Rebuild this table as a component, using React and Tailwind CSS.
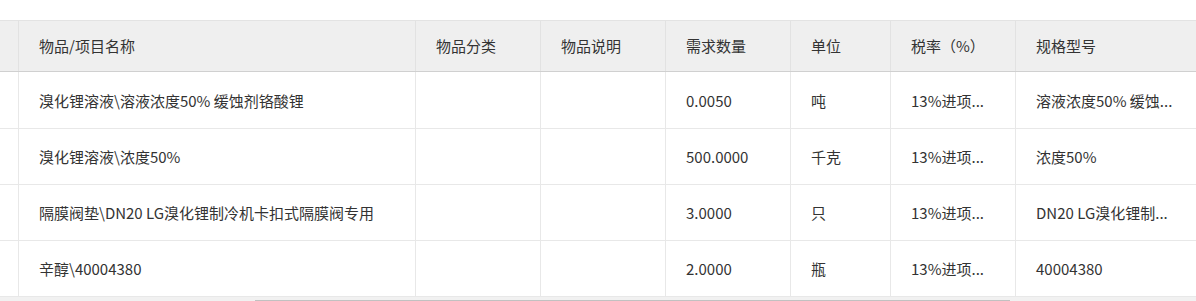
const columns = [
  { key: "name", title: "物品/项目名称" },
  { key: "category", title: "物品分类" },
  { key: "desc", title: "物品说明" },
  { key: "qty", title: "需求数量" },
  { key: "unit", title: "单位" },
  { key: "tax", title: "税率（%）" },
  { key: "spec", title: "规格型号" },
];

const rows = [
  { name: "溴化锂溶液\\溶液浓度50% 缓蚀剂铬酸锂", category: "", desc: "", qty: "0.0050", unit: "吨", tax: "13%进项...", spec: "溶液浓度50% 缓蚀..." },
  { name: "溴化锂溶液\\浓度50%", category: "", desc: "", qty: "500.0000", unit: "千克", tax: "13%进项...", spec: "浓度50%" },
  { name: "隔膜阀垫\\DN20 LG溴化锂制冷机卡扣式隔膜阀专用", category: "", desc: "", qty: "3.0000", unit: "只", tax: "13%进项...", spec: "DN20 LG溴化锂制..." },
  { name: "辛醇\\40004380", category: "", desc: "", qty: "2.0000", unit: "瓶", tax: "13%进项...", spec: "40004380" },
];

const grid = "grid grid-cols-[18px_397px_125px_125px_125px_100px_125px_1fr]";

export default function App() {
  return (
    <div
      className="w-[1196px] h-[301px] overflow-hidden bg-white text-[#333] text-[15px]"
      style={{ fontFamily: '"Noto Sans CJK SC", "Noto Sans", sans-serif' }}
    >
      <div className="h-[20px]" />
      <div className={`${grid} h-[52px] bg-[#efefef] border-t border-t-[#e3e3e3] border-b border-b-[#d0d0d0]`}>
        <div />
        {columns.map((c) => (
          <div key={c.key} className="flex items-center pl-5 border-l border-l-[#e2e2e2] whitespace-nowrap">
            {c.title}
          </div>
        ))}
      </div>
      {rows.map((r, i) => (
        <div key={i} className={`${grid} ${i === 0 ? "h-[57px]" : "h-[56px]"} border-b border-b-[#e8e8e8]`}>
          <div />
          {columns.map((c) => (
            <div key={c.key} className="flex items-center pl-5 pt-[2px] border-l border-l-[#e8e8e8] whitespace-nowrap overflow-hidden">
              {r[c.key]}
            </div>
          ))}
        </div>
      ))}
      <div className="h-[6px] bg-[#f1f1f1] pt-[3px]">
        <div className="ml-[255px] w-[755px] h-[3px] bg-[#c1c1c1]" />
      </div>
    </div>
  );
}
